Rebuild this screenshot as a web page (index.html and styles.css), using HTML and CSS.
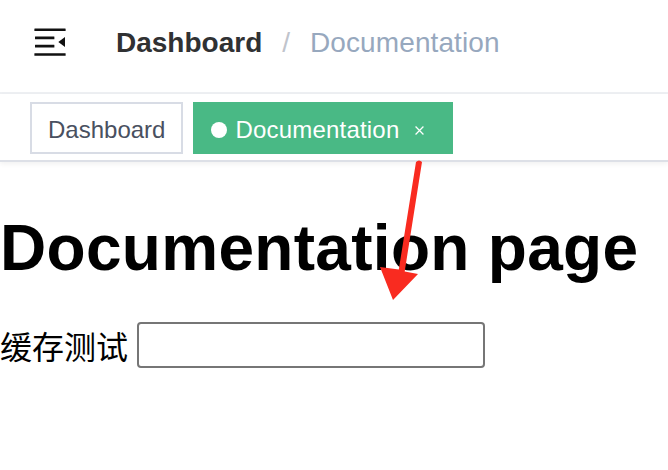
FILE: index.html
```html
<!DOCTYPE html>
<html lang="zh">
<head>
<meta charset="utf-8">
<title>Documentation</title>
<link rel="stylesheet" href="styles.css">
</head>
<body>
<div class="app">
  <header class="navbar">
    <div class="hamburger-wrap">
      <svg class="hamburger" viewBox="0 0 1024 1024" width="40" height="40" aria-hidden="true">
        <rect x="112" y="168" width="800" height="64" rx="8"/>
        <rect x="128" y="370" width="496" height="72" rx="8"/>
        <rect x="128" y="582" width="496" height="72" rx="8"/>
        <rect x="112" y="800" width="800" height="64" rx="8"/>
        <path d="M725 512 L896 382 L896 642 Z"/>
      </svg>
    </div>
    <nav class="breadcrumb">
      <span class="crumb crumb-link">Dashboard</span>
      <span class="crumb-sep">/</span>
      <span class="crumb crumb-current">Documentation</span>
    </nav>
  </header>
  <div class="tags-view">
    <span class="tag">Dashboard</span>
    <span class="tag tag-active">
      <span class="tag-dot"></span>
      <span class="tag-title">Documentation</span>
      <span class="tag-close">
        <svg viewBox="0 0 8 8" width="9" height="9" aria-hidden="true"><path d="M0.5 0.5 L7.5 7.5 M7.5 0.5 L0.5 7.5"/></svg>
      </span>
    </span>
  </div>
  <main class="content">
    <h1 class="page-title">Documentation page</h1>
    <div class="field">
      <label class="field-label" for="cache">缓存测试</label>
      <input class="field-input" id="cache" type="text">
    </div>
  </main>
  <svg class="annotation" viewBox="0 0 668 470" width="668" height="470" aria-hidden="true">
    <path d="M416 162 Q419 159 422 162 L404.7 271.5 L418 274 L393 300 L380 267 L398.8 269.5 Z"/>
  </svg>
</div>
</body>
</html>
```

FILE: styles.css
```css
html, body {
  margin: 0;
  padding: 0;
  background: #fff;
}

body {
  font-family: "Liberation Sans", Arial, "Noto Sans CJK SC", sans-serif;
  color: #000;
}

.app {
  position: relative;
  width: 668px;
  height: 470px;
  overflow: hidden;
}

.navbar {
  display: flex;
  align-items: center;
  border-bottom: 2px solid #eef0f3;
  box-sizing: border-box;
  height: 94px;
}

.hamburger-wrap {
  padding: 0 30px;
  display: flex;
  align-items: center;
  margin-top: -8px;
}

.hamburger {
  display: block;
  fill: #111;
}

.breadcrumb {
  margin-left: 16px;
  font-size: 28px;
  display: flex;
  align-items: baseline;
  margin-top: -6px;
}

.crumb-link {
  font-weight: bold;
  color: #303133;
}

.crumb-sep {
  margin: 0 20px;
  color: #c0c4cc;
}

.crumb-current {
  color: #97a8be;
  letter-spacing: 0.1px;
}

.tags-view {
  height: 68px;
  box-sizing: border-box;
  border-bottom: 2px solid #dde0e7;
  box-shadow: 0 2px 5px rgba(0, 0, 0, 0.06);
  display: flex;
  align-items: flex-start;
  padding: 8px 0 0 30px;
  gap: 10px;
}

.tag {
  height: 52px;
  box-sizing: border-box;
  border: 2px solid #d8dce5;
  color: #495060;
  background: #fff;
  padding: 3px 16px 0;
  font-size: 24px;
  display: inline-flex;
  align-items: center;
}

.tag-active {
  background: #49b985;
  border-color: #49b985;
  color: #fff;
}

.tag-dot {
  width: 16px;
  height: 16px;
  border-radius: 50%;
  background: #fff;
  margin-right: 8px;
}

.tag-title {
  letter-spacing: 0.2px;
}

.tag-close {
  width: 32px;
  height: 32px;
  margin-left: 4px;
  display: inline-flex;
  align-items: center;
  justify-content: center;
  padding-top: 2px;
  box-sizing: border-box;
}

.tag-close svg {
  display: block;
  stroke: #fff;
  stroke-width: 1.1;
  fill: none;
}

.content {
  padding: 0;
}

.page-title {
  font-size: 64px;
  font-weight: bold;
  margin: 49px 0 37px;
  line-height: normal;
  letter-spacing: 0.3px;
}

.field {
  display: flex;
  align-items: center;
  gap: 9px;
}

.field-label {
  font-family: "Noto Sans CJK SC", sans-serif;
  font-size: 32px;
  line-height: 46px;
}

.field-input {
  width: 348px;
  height: 46px;
  box-sizing: border-box;
  border: 2px solid #767676;
  border-radius: 4px;
  padding: 0 4px;
  margin: 0;
  font-size: 26px;
  background: #fff;
}

.annotation {
  position: absolute;
  top: 0;
  left: 0;
  pointer-events: none;
  fill: #f92b20;
}
```
